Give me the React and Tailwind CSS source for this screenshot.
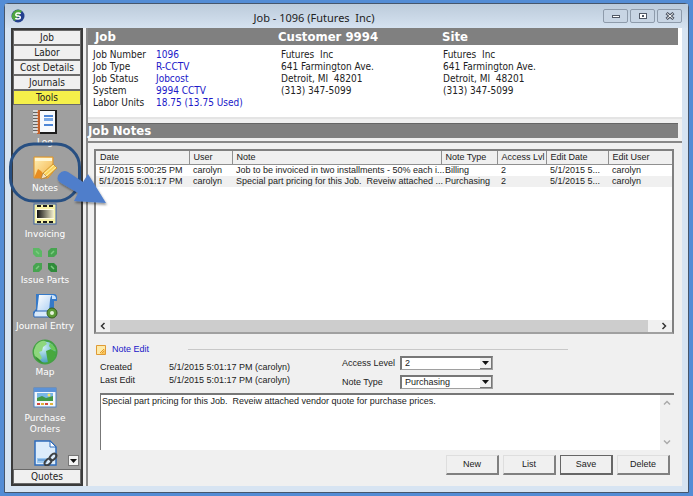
import React, { useEffect, useRef, useState } from "react";

const TABS = ["Job", "Labor", "Cost Details", "Journals", "Tools"];

const JOB_FIELDS = [
  ["Job Number", "1096"],
  ["Job Type", "R-CCTV"],
  ["Job Status", "Jobcost"],
  ["System", "9994 CCTV"],
  ["Labor Units", "18.75 (13.75 Used)"],
];

const ADDRESS = ["Futures  Inc", "641 Farmington Ave.", "Detroit, MI  48201", "(313) 347-5099"];

const COLUMNS = ["Date", "User", "Note", "Note Type", "Access Lvl", "Edit Date", "Edit User"];

const NOTES = [
  {
    id: 1,
    cells: [
      "5/1/2015 5:00:25 PM",
      "carolyn",
      "Job to be invoiced in two installments - 50% each i...",
      "Billing",
      "2",
      "5/1/2015 5...",
      "carolyn",
    ],
  },
  {
    id: 2,
    cells: [
      "5/1/2015 5:01:17 PM",
      "carolyn",
      "Special part pricing for this Job.  Reveiw attached ...",
      "Purchasing",
      "2",
      "5/1/2015 5...",
      "carolyn",
    ],
  },
];

const NOTE_TEXT =
  "Special part pricing for this Job.  Reveiw attached vendor quote for purchase prices.";

/* ---------- sidebar icons ---------- */

const LogIcon = () => (
  <svg viewBox="0 0 26 26" className="size-[26px]">
    <rect x="5" y="1" width="20" height="24" fill="#1c1c1c" />
    <rect x="6" y="2" width="17" height="21" fill="#f7fafd" />
    <rect x="5" y="1" width="3" height="24" fill="#c4622c" />
    <rect x="12" y="6" width="9" height="2" fill="#4d86d6" />
    <rect x="12" y="9" width="9" height="3" fill="#7aa9e6" />
    <rect x="12" y="15" width="9" height="2" fill="#4d86d6" />
    {[2, 5, 8, 11, 14, 17, 20, 23].map((y) => (
      <path key={y} d={`M1 ${y}h5`} stroke="#e8e8e8" strokeWidth="1.5" />
    ))}
    {[3, 6, 9, 12, 15, 18, 21].map((y) => (
      <path key={y} d={`M1 ${y + 0.5}h4`} stroke="#555" strokeWidth="0.8" />
    ))}
  </svg>
);

const NotesIcon = () => (
  <svg viewBox="0 0 26 26" className="size-[26px]">
    <defs>
      <linearGradient id="note" x1="0" y1="0" x2="1" y2="1">
        <stop offset="0" stopColor="#fff0b5" />
        <stop offset="1" stopColor="#f3b248" />
      </linearGradient>
    </defs>
    <path d="M2 2h19v15l-5 6H2z" fill="url(#note)" stroke="#dd9227" />
    <path d="M3 3h17v3H3z" fill="#fff6d3" />
    <path d="M2 23l4-9 3 2 4 5 2 2z" fill="#e78d22" />
    <path d="M9 24l2-6 10-9 4 4-10 9z" fill="#fbd25b" stroke="#c98a28" strokeWidth="0.8" />
    <path d="M12 19l10-9M14 21l10-9" stroke="#fff0a8" />
    <path d="M9 24l2-6 4 4z" fill="#f3e3c2" stroke="#a5752f" strokeWidth="0.6" />
  </svg>
);

const InvoicingIcon = () => (
  <svg viewBox="0 0 26 26" className="size-[26px]">
    <defs>
      <linearGradient id="film">
        <stop offset="0" stopColor="#111" />
        <stop offset="1" stopColor="#f5f2cf" />
      </linearGradient>
    </defs>
    <rect x="2" y="3" width="22" height="20" fill="#f8f3a5" stroke="#3d63a5" />
    <path d="M5 5h17M5 21h17" stroke="#1c1c1c" strokeWidth="2" strokeDasharray="4 2" />
    <rect x="4" y="8" width="18" height="10" fill="#fffce0" />
    <rect x="5" y="9" width="17" height="8" fill="url(#film)" />
  </svg>
);

const IssuePartsIcon = () => (
  <svg viewBox="0 0 26 26" className="size-[26px]">
    <path d="M1 1h6l3 3v6H4L1 7z" fill="#5cb865" />
    <path d="M25 1h-6l-3 3v6h6l3-3z" fill="#47a450" />
    <path d="M1 25v-6l3-3h6v6l-3 3z" fill="#47a450" />
    <path d="M25 25v-6l-3-3h-6v6l3 3z" fill="#2f8b3a" />
    <path d="M4 4l3 3M22 4l-3 3M4 22l3-3M22 22l-3-3" stroke="#7ccb80" strokeWidth="1.5" />
  </svg>
);

const JournalIcon = () => (
  <svg viewBox="0 0 26 26" className="size-[26px]">
    <defs>
      <linearGradient id="scroll" x1="0" y1="0" x2="1" y2="1">
        <stop offset="0" stopColor="#ffffff" />
        <stop offset="1" stopColor="#a9cdf3" />
      </linearGradient>
    </defs>
    <path d="M4 1h18q3 0 3 4v3h-3v16H2L1 19l3-3z" fill="#3579c8" />
    <path d="M7 2h13q-2 2-2 5l-1 12H5z" fill="url(#scroll)" />
    <path d="M3 18h14l2 6H2q-1-3 1-6z" fill="#d9eafb" stroke="#2a67b6" />
    <path d="M20 2q4 0 4 4h-4z" fill="#cfe4fa" />
    <circle cx="20" cy="20" r="5" fill="#5d9a38" stroke="#365f20" />
    <circle cx="20" cy="20" r="2" fill="#e8f4dc" />
  </svg>
);

const MapIcon = () => (
  <svg viewBox="0 0 26 26" className="size-[26px]">
    <defs>
      <radialGradient id="sea" cx="0.4" cy="0.3" r="0.8">
        <stop offset="0" stopColor="#d2f2f7" />
        <stop offset="1" stopColor="#338fb5" />
      </radialGradient>
    </defs>
    <circle cx="13" cy="13" r="11.5" fill="url(#sea)" stroke="#45a045" strokeWidth="2" />
    <path d="M4 6q5-5 9-4l2 3-4 3-1 4-3 1 3 6-3 3q-6-5-5-11z" fill="#8ed77d" />
    <path d="M14 12l5-2 5 3-2 7-6 4-1-6z" fill="#47a83e" />
    <path d="M18 4q5 3 6 8l-4-1-3-4z" fill="#6cc85d" />
    <path d="M3 17l4 3 4 4q-6-1-8-7z" fill="#378f34" />
  </svg>
);

const PurchaseIcon = () => (
  <svg viewBox="0 0 26 26" className="size-[26px]">
    <rect x="2" y="3" width="22" height="19" fill="#f3f7fc" stroke="#4d82c5" />
    <rect x="2" y="3" width="22" height="4" fill="#5b92d8" />
    <rect x="5" y="8" width="16" height="8" fill="#79b7e6" />
    <path d="M5 16v-3l5-2 4 2 7-2v5z" fill="#419846" />
    <circle cx="17" cy="10" r="1.5" fill="#f6e56a" />
    <path d="M5 19h3M13 19h3" stroke="#d3493b" strokeWidth="2" />
    <path d="M9 19h3M18 19h3" stroke="#e2b23a" strokeWidth="2" />
  </svg>
);

const DocumentIcon = () => (
  <svg viewBox="0 0 26 26" className="size-[26px]">
    <path d="M3 1h15l6 6v18H3z" fill="#dcecfb" stroke="#2e6cbd" strokeWidth="1.5" />
    <path d="M18 1v6h6z" fill="#fff" stroke="#2e6cbd" />
    <path d="M5 18h10v5H5z" fill="#9cc8f0" />
    <path d="M6 20h7" stroke="#4283ca" />
    <ellipse cx="21" cy="17" rx="4" ry="2.5" transform="rotate(-45 21 17)" fill="none" stroke="#3d4144" strokeWidth="2" />
    <ellipse cx="16" cy="22" rx="4" ry="2.5" transform="rotate(-45 16 22)" fill="none" stroke="#3d4144" strokeWidth="2" />
  </svg>
);

const TOOLS = [
  { label: "Log", icon: LogIcon },
  { label: "Notes", icon: NotesIcon },
  { label: "Invoicing", icon: InvoicingIcon },
  { label: "Issue Parts", icon: IssuePartsIcon },
  { label: "Journal Entry", icon: JournalIcon },
  { label: "Map", icon: MapIcon },
  { label: "Purchase Orders", icon: PurchaseIcon },
];

/* Ring and arrow drawn over the Notes shortcut */
const Callout = () => (
  <svg
    viewBox="0 0 106 74"
    className="pointer-events-none absolute -left-[4px] -top-[13px] z-10 h-[74px] w-[106px] overflow-visible"
  >
    <defs>
      <filter id="shade" x="-20%" y="-20%" width="150%" height="150%">
        <feDropShadow dx="1" dy="2" stdDeviation="1" floodColor="#000" floodOpacity="0.4" />
      </filter>
    </defs>
    <rect x="1.5" y="2" width="69" height="57" rx="23" fill="none" stroke="#274f82" strokeWidth="3" />
    <path
      d="M50 32q4-5 9-2l15 10 5-8 18 29-32-2 4-8-17-10q-6-4-2-9z"
      fill="#4f7ecb"
      filter="url(#shade)"
    />
  </svg>
);

const DownArrow = () => (
  <svg viewBox="0 0 7 4" className="h-1 w-[7px]">
    <path d="M0 0h7L3.5 4z" fill="#111" />
  </svg>
);

const Chevron = ({ d, color = "#333" }) => (
  <svg viewBox="0 0 8 8" className="size-2" fill="none" stroke={color} strokeWidth="1.5">
    <path d={d} />
  </svg>
);

const WindowButton = ({ label, children }) => (
  <button
    type="button"
    aria-label={label}
    className="flex h-[14px] w-[25px] items-center justify-center rounded-[2px] border border-[#8e9bab] bg-[#c8d5e4]"
  >
    <svg viewBox="0 0 10 8" className="h-2 w-[10px]" fill="#fff" stroke="#505866">
      {children}
    </svg>
  </button>
);

const TitleBar = () => (
  <header className="flex h-6 shrink-0 items-center bg-linear-to-b from-[#bccbdb] to-[#d5e2f0] px-[6px]">
    <svg viewBox="0 0 14 14" className="size-[14px]">
      <circle cx="7" cy="7" r="6.5" fill="#23408f" />
      <path d="M1 9A6.500 6.500 0 0 1 11 2L4 12Q2 11 1 9z" fill="#4fa63f" />
      <path
        d="M9.500 5Q9 4 7 4T4.800 5.500 7 7t2.300 1.500T7 10t-2.500-1"
        fill="none"
        stroke="#fff"
        strokeWidth="1.500"
      />
    </svg>
    <h1 className="flex-1 whitespace-pre pt-[3px] text-center text-[11px] leading-4 text-[#222] font-['Noto_Sans',sans-serif]">
      Job - 1096 (Futures  Inc)
    </h1>
    <div className="flex justify-end gap-[2px]">
      <WindowButton label="Minimize">
        <rect x="1.500" y="3.500" width="7" height="2" />
      </WindowButton>
      <WindowButton label="Maximize">
        <rect x="1.500" y="1.500" width="7" height="5" />
        <rect x="4" y="3" width="2" height="2" fill="#505866" stroke="none" />
      </WindowButton>
      <WindowButton label="Close">
        <path d="M1.500 1l7 6M8.500 1l-7 6" strokeWidth="3" />
        <path d="M2 1.500l6 5M8 1.500l-6 5" stroke="#fff" />
      </WindowButton>
    </div>
  </header>
);

const tabClass = "w-full shrink-0 border border-[#6a6a6a] text-center text-[10px] text-[#222]";

const Sidebar = () => (
  <nav className="relative z-10 flex w-[72px] shrink-0 flex-col border-2 border-[#3a3a3a] bg-[#9f9f9f]">
    <div className="flex flex-col">
      {TABS.map((tab) => (
        <button
          key={tab}
          type="button"
          className={`${tabClass} h-[15px] leading-[12px] ${
            tab === "Tools" ? "bg-[#f5f04a]" : "bg-[#f0f0f0]"
          }`}
        >
          {tab}
        </button>
      ))}
    </div>
    <ul className="flex min-h-0 flex-1 flex-col gap-[7px] pr-1 pt-1">
      {TOOLS.map(({ label, icon: Icon }) => (
        <li key={label} className="relative h-[39px] shrink-0">
          <button
            type="button"
            className="flex w-full flex-col items-center gap-[2px] text-[9px] leading-[11px] text-white font-['DejaVu_Sans','Verdana',sans-serif]"
          >
            <Icon />
            <span className={label === "Purchase Orders" ? "w-14" : "whitespace-nowrap"}>{label}</span>
          </button>
          {label === "Notes" && <Callout />}
        </li>
      ))}
      <li className="flex shrink-0 justify-center pt-[9px]">
        <div className="relative -mb-2 flex w-full justify-center">
          <button type="button" aria-label="Documents">
            <DocumentIcon />
          </button>
          <button
            type="button"
            aria-label="More tools"
            className="absolute -right-[2px] bottom-0 flex size-[11px] items-center justify-center border border-[#777] bg-[#f4f4f4]"
          >
            <DownArrow />
          </button>
        </div>
      </li>
    </ul>
    <button type="button" className={`${tabClass} relative h-[15px] bg-[#f0f0f0] leading-[12px]`}>
      Quotes
    </button>
  </nav>
);

const JobSummary = () => (
  <section className="shrink-0 border-b-2 border-[#e4e4e4] bg-white pb-2">
    <div className="mr-1 grid grid-cols-[183px_164px_1fr] bg-[#808080] pl-[7px] text-[13px] font-bold leading-[17px] text-white">
      <h2>Job</h2>
      <h2>Customer 9994</h2>
      <h2>Site</h2>
    </div>
    <div className="grid grid-cols-[188px_162px_1fr] pl-[5px] pt-1 text-[10px] leading-3 text-[#222]">
      <dl className="grid grid-cols-[63px_1fr]">
        {JOB_FIELDS.map(([label, value]) => (
          <React.Fragment key={label}>
            <dt>{label}</dt>
            <dd className="text-[#2018c8]">{value}</dd>
          </React.Fragment>
        ))}
      </dl>
      {["customer", "site"].map((place) => (
        <address key={place} className="whitespace-pre not-italic">
          {ADDRESS.map((line) => (
            <div key={line}>{line}</div>
          ))}
        </address>
      ))}
    </div>
  </section>
);

const NotesTable = () => (
  <div className="flex h-[185px] flex-col border-2 border-[#808080] border-b-[#a0a0a0] bg-white">
    <table className="w-full table-fixed border-collapse text-left text-[9px] text-[#222]">
      <colgroup>
        <col className="w-[93px]" />
        <col className="w-[43px]" />
        <col />
        <col className="w-[56px]" />
        <col className="w-[49px]" />
        <col className="w-[62px]" />
        <col className="w-[64px]" />
      </colgroup>
      <thead>
        <tr className="bg-[#f0f0f0]">
          {COLUMNS.map((col) => (
            <th
              key={col}
              className="whitespace-nowrap border-b border-r border-[#909090] pl-1 font-normal leading-[13px] last:border-r-0"
            >
              {col}
            </th>
          ))}
        </tr>
      </thead>
      <tbody>
        {NOTES.map(({ id, cells }) => (
          <tr key={id} className="even:bg-[#f0f0f0]">
            {cells.map((cell, i) => (
              <td key={COLUMNS[i]} className="whitespace-pre pl-1 leading-[11px] first:pl-[3px]">
                {cell}
              </td>
            ))}
          </tr>
        ))}
      </tbody>
    </table>
    <div className="mt-auto flex h-3 items-stretch bg-[#f0f0f0]">
      <button type="button" aria-label="Scroll left" className="flex w-[14px] items-center justify-center">
        <Chevron d="M5.500 1l-3 3 3 3" />
      </button>
      <div className="mr-2 flex-1 bg-[#cdcdcd]" />
      <button type="button" aria-label="Scroll right" className="flex w-4 items-center justify-center">
        <Chevron d="M2.500 1l3 3-3 3" />
      </button>
    </div>
  </div>
);

const SelectField = ({ id, label, options }) => (
  <div className="flex items-center">
    <label htmlFor={id} className="w-[58px] whitespace-nowrap">
      {label}
    </label>
    <div className="relative">
      <select
        id={id}
        className="block h-[14px] w-[93px] appearance-none border border-[#a0a0a0] border-l-2 border-t-2 border-l-[#777] border-t-[#777] bg-white pl-[3px] text-[9px] leading-[11px]"
      >
        {options.map((option) => (
          <option key={option}>{option}</option>
        ))}
      </select>
      <span className="pointer-events-none absolute bottom-px right-px top-[2px] flex w-3 items-center justify-center border-b border-r border-[#777] bg-[#f0f0f0]">
        <DownArrow />
      </span>
    </div>
  </div>
);

const NoteEdit = () => {
  const [note, setNote] = useState(NOTE_TEXT);
  const noteRef = useRef(null);

  // Put the cursor behind the last character
  useEffect(() => {
    noteRef.current.focus();
    noteRef.current.setSelectionRange(NOTE_TEXT.length, NOTE_TEXT.length);
  }, []);

  return (
    <form onSubmit={(e) => e.preventDefault()} className="pt-[9px] text-[9px] leading-[13px] text-[#222]">
      <div className="flex items-center pl-[2px]">
        <svg viewBox="0 0 10 10" className="size-[10px]">
          <path d="M0.500 0.500h9v9h-9z" fill="#f8c55a" stroke="#df9a35" />
          <path d="M1 1h8v3L4 9H1z" fill="#fdeaa9" />
          <path d="M4 8l4-4M6 8l2-2" stroke="#e59a2b" />
        </svg>
        <h3 className="w-[82px] pl-[6px] text-[#2018c8]">Note Edit</h3>
        <hr className="mr-[106px] flex-1 border-[#c8c8c8]" />
      </div>

      <div className="flex pl-[6px]">
        <dl className="grid w-[242px] grid-cols-[69px_1fr] content-start pt-[5px]">
          <dt>Created</dt>
          <dd>5/1/2015 5:01:17 PM (carolyn)</dd>
          <dt>Last Edit</dt>
          <dd>5/1/2015 5:01:17 PM (carolyn)</dd>
        </dl>
        <div className="flex flex-col gap-[5px]">
          <SelectField id="access-level" label="Access Level" options={["2", "1", "3"]} />
          <SelectField id="note-type" label="Note Type" options={["Purchasing", "Billing"]} />
        </div>
      </div>

      <div className="ml-[6px] mt-1 flex h-[57px] border-l border-t-2 border-[#777] bg-white">
        <textarea
          ref={noteRef}
          aria-label="Note"
          value={note}
          onChange={(e) => setNote(e.target.value)}
          className="min-w-0 flex-1 resize-none overflow-hidden pl-px leading-[13px] outline-none"
        />
        <div className="flex w-[14px] flex-col items-center justify-between bg-[#f0f0f0] py-1">
          <Chevron d="M1 5.500l3-3 3 3" color="#aaa" />
          <Chevron d="M1 2.500l3 3 3-3" color="#aaa" />
        </div>
      </div>

      <div className="mr-1 mt-[5px] flex justify-end gap-1">
        {["New", "List", "Save", "Delete"].map((action) => (
          <button
            key={action}
            type={action === "Save" ? "submit" : "button"}
            className={`h-5 w-[53px] border border-b-2 border-r-2 bg-[#f0f0f0] ${
              action === "Save"
                ? "border-[#666]"
                : "border-[#dedede] border-b-[#808080] border-r-[#808080]"
            }`}
          >
            {action}
          </button>
        ))}
      </div>
    </form>
  );
};

const App = () => (
  <div className="flex min-h-screen bg-[#538cd5] px-[4px] py-[3px] font-['DejaVu_Sans_Condensed','DejaVu_Sans',sans-serif]">
    <div className="flex min-w-0 flex-1 flex-col rounded-t-[4px] border border-[#46566c] bg-[#d7e4f2]">
      <TitleBar />
      <div className="mx-[6px] mb-[6px] flex flex-1 bg-[#f0f0f0]">
        <Sidebar />
        <main className="ml-[3px] flex min-w-0 flex-1 flex-col border-l-2 border-[#8a8a8a]">
          <JobSummary />
          <h2 className="mr-1 mt-1 border-t border-[#666] bg-[#808080] text-[13px] font-bold leading-[14px] text-white">
            Job Notes
          </h2>
          <div className="mt-[3px] flex-1 border-t-2 border-[#888] pl-[6px] pr-2 pt-[6px] font-['Liberation_Sans',Arial,sans-serif]">
            <NotesTable />
            <NoteEdit />
          </div>
        </main>
      </div>
    </div>
  </div>
);

export default App;
